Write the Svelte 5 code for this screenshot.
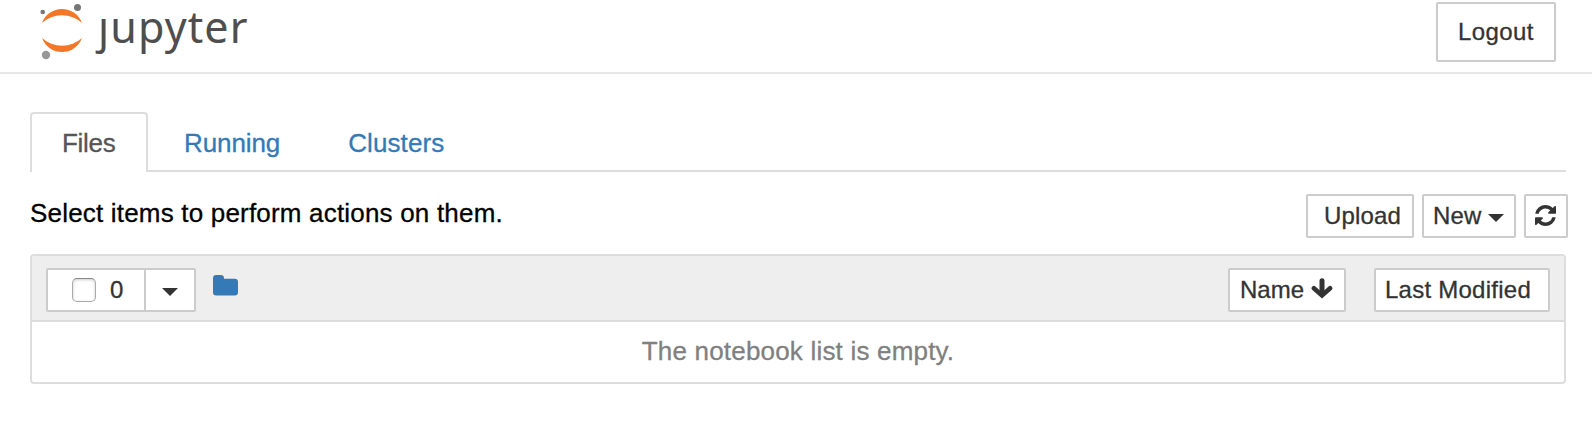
<script>
  const tabs = ['Files', 'Running', 'Clusters'];
  let active = $state('Files');
  let selected = $state(false);
</script>

<header>
  <svg class="logo" width="220" height="64" viewBox="36 0 220 64" role="img" aria-label="jupyter">
    <path fill="#f37726" d="M42 23A21.3 21.3 0 0 1 82 23A29.500 29.500 0 0 0 42 23Z" />
    <path fill="#f37726" d="M42 38A21.3 21.3 0 0 0 82 38A29.500 29.500 0 0 1 42 38Z" />
    <circle cx="42.7" cy="12" r="2.3" fill="#767677" />
    <circle cx="77.5" cy="7.6" r="3.5" fill="#767677" />
    <circle cx="46" cy="55" r="4.2" fill="#989798" />
    <text class="wordmark" x="98" y="42.500" textLength="149.500" lengthAdjust="spacing">ȷupyter</text>
  </svg>
  <button class="btn logout">Logout</button>
</header>

<main>
  <nav>
    {#each tabs as tab}
      <button class="tab" class:active={active === tab} onclick={() => (active = tab)}>{tab}</button>
    {/each}
  </nav>

  <div class="toolbar">
    <span class="hint">Select items to perform actions on them.</span>
    <div class="actions">
      <button class="btn upload">Upload</button>
      <button class="btn new"><span>New</span><i class="caret"></i></button>
      <button class="btn refresh" aria-label="Refresh">
        <svg width="21" height="21" viewBox="0 0 1536 1536" fill="#333">
          <path d="M1511 928q0 5-1 7-64 268-268 434.500T764 1536q-146 0-282.500-55T238 1324l-129 129q-19 19-45 19t-45-19-19-45V960q0-26 19-45t45-19h448q26 0 45 19t19 45-19 45l-137 137q71 66 161 102t187 36q134 0 250-65t186-179q11-17 53-117 8-23 30-23h192q13 0 22.500 9.500t9.500 22.500zm25-800v448q0 26-19 45t-45 19h-448q-26 0-45-19t-19-45 19-45l138-138Q969 256 768 256q-134 0-250 65T332 500q-11 17-53 117-8 23-30 23H50q-13 0-22.500-9.500T18 608v-7q65-268 270-434.500T768 0q146 0 284 55.500T1297 212l130-129q19-19 45-19t45 19 19 45z" />
        </svg>
      </button>
    </div>
  </div>

  <section>
    <div class="list-header">
      <div class="group">
        <label class="select"><input type="checkbox" bind:checked={selected} /><span>0</span></label>
        <button class="menu" aria-label="Selection menu"><i class="caret"></i></button>
      </div>
      <svg class="folder" width="25" height="21" viewBox="0 0 25 21">
        <path fill="#337ab7" d="M3.300 0H7.700Q11 0 11 3.300V3.800H21.700Q25 3.800 25 7.100V17.200Q25 20.500 21.700 20.500H3.300Q0 20.500 0 17.200V3.300Q0 0 3.300 0Z" />
      </svg>
      <button class="btn name">
        <span>Name</span>
        <svg width="22" height="21" viewBox="0 0 22 21" fill="none" stroke="#333">
          <path stroke-width="5" stroke-linecap="round" d="M11 2.800V14" />
          <path stroke-width="4.600" stroke-linecap="round" d="M2.900 10.200L11 17.500L19.100 10.200" />
        </svg>
      </button>
      <button class="btn modified">Last Modified</button>
    </div>
    <div class="empty"><span>The notebook list is empty.</span></div>
  </section>
</main>

<style>
  :global(body) {
    margin: 0;
    background: #fff;
  }
  header, main, button {
    font-family: 'Liberation Sans', Arial, sans-serif;
    font-size: 24px;
    color: #333;
    -webkit-text-stroke: 0.3px currentColor;
  }
  header {
    box-sizing: border-box;
    height: 74px;
    padding: 0 36px;
    display: flex;
    justify-content: space-between;
    border-bottom: 2px solid #e7e7e7;
  }
  .logo {
    display: block;
    overflow: visible;
  }
  .wordmark {
    font-family: 'Noto Sans', sans-serif;
    font-size: 43px;
    fill: #4e4e4e;
    -webkit-text-stroke: 0.5px #4e4e4e;
  }
  button {
    box-sizing: border-box;
    margin: 0;
    padding: 0;
    background: #fff;
    white-space: nowrap;
  }
  .btn {
    display: flex;
    align-items: center;
    height: 44px;
    border: 2px solid #ccc;
    border-radius: 2px;
    letter-spacing: 0.15px;
  }
  .logout {
    width: 120px;
    height: 60px;
    margin-top: 2px;
    padding-left: 20px;
    letter-spacing: 0.4px;
  }
  main {
    padding: 38px 26px 0 30px;
  }
  nav {
    display: flex;
    height: 58px;
    border-bottom: 2px solid #ddd;
  }
  .tab {
    height: 60px;
    margin-right: 4px;
    padding: 0 30px;
    border: 2px solid transparent;
    border-bottom: 0;
    border-radius: 4px 4px 0 0;
    background: transparent;
    font-size: 26px;
    letter-spacing: -0.1px;
    color: #337ab7;
    text-align: left;
  }
  .tab:last-child {
    letter-spacing: 0.1px;
  }
  .tab.active {
    width: 118px;
    padding: 0 0 0 30px;
    border-color: #ddd;
    background: #fff;
    color: #555;
    letter-spacing: -0.3px;
  }
  .toolbar {
    display: flex;
    justify-content: space-between;
    height: 82px;
    margin-right: -2px;
  }
  .hint {
    padding-top: 26px;
    line-height: 30px;
    font-size: 26px;
    letter-spacing: 0.19px;
    color: #000;
  }
  .actions {
    display: flex;
    gap: 8px;
    padding-top: 22px;
  }
  .upload {
    width: 108px;
    padding-left: 16px;
  }
  .new {
    width: 94px;
    padding: 0 10px 0 9px;
    justify-content: space-between;
  }
  .caret {
    border: 8px solid transparent;
    border-top-color: #333;
    border-bottom: 0;
    margin-top: 4px;
  }
  .refresh {
    width: 44px;
    padding: 0 1px 1px 0;
    justify-content: center;
  }
  section {
    border: 2px solid #ddd;
    border-radius: 4px;
    overflow: hidden;
  }
  .list-header {
    display: flex;
    align-items: center;
    box-sizing: border-box;
    height: 66px;
    padding: 4px 14px 0;
    border-bottom: 2px solid #ddd;
    background: #eee;
  }
  .group {
    display: flex;
    box-sizing: border-box;
    width: 150px;
    height: 44px;
    border: 2px solid #ccc;
    border-radius: 2px;
    background: #fff;
  }
  .select {
    display: flex;
    align-items: center;
    width: 96px;
    border-right: 2px solid #ccc;
  }
  .select span {
    margin-left: 14px;
  }
  input {
    appearance: none;
    box-sizing: border-box;
    width: 24px;
    height: 24px;
    margin: 0 0 0 24px;
    border: 1px solid #aaa;
    border-top-color: #888;
    border-radius: 5px;
    background: #fff;
    box-shadow: inset 0 1px 3px #ccc;
  }
  .menu {
    display: flex;
    flex: 1;
    align-items: center;
    justify-content: center;
    border: 0;
  }
  .folder {
    margin: 0 auto 9px 17px;
  }
  .name {
    width: 118px;
    margin-right: 28px;
    padding: 0 11px 0 10px;
    justify-content: space-between;
    letter-spacing: 0;
  }
  .name svg {
    margin-bottom: 3px;
  }
  .modified {
    width: 176px;
    padding-left: 9px;
    letter-spacing: 0.25px;
  }
  .empty {
    height: 60px;
    line-height: 58px;
    font-size: 26px;
    letter-spacing: 0.19px;
    color: #808080;
    text-align: center;
  }
</style>
